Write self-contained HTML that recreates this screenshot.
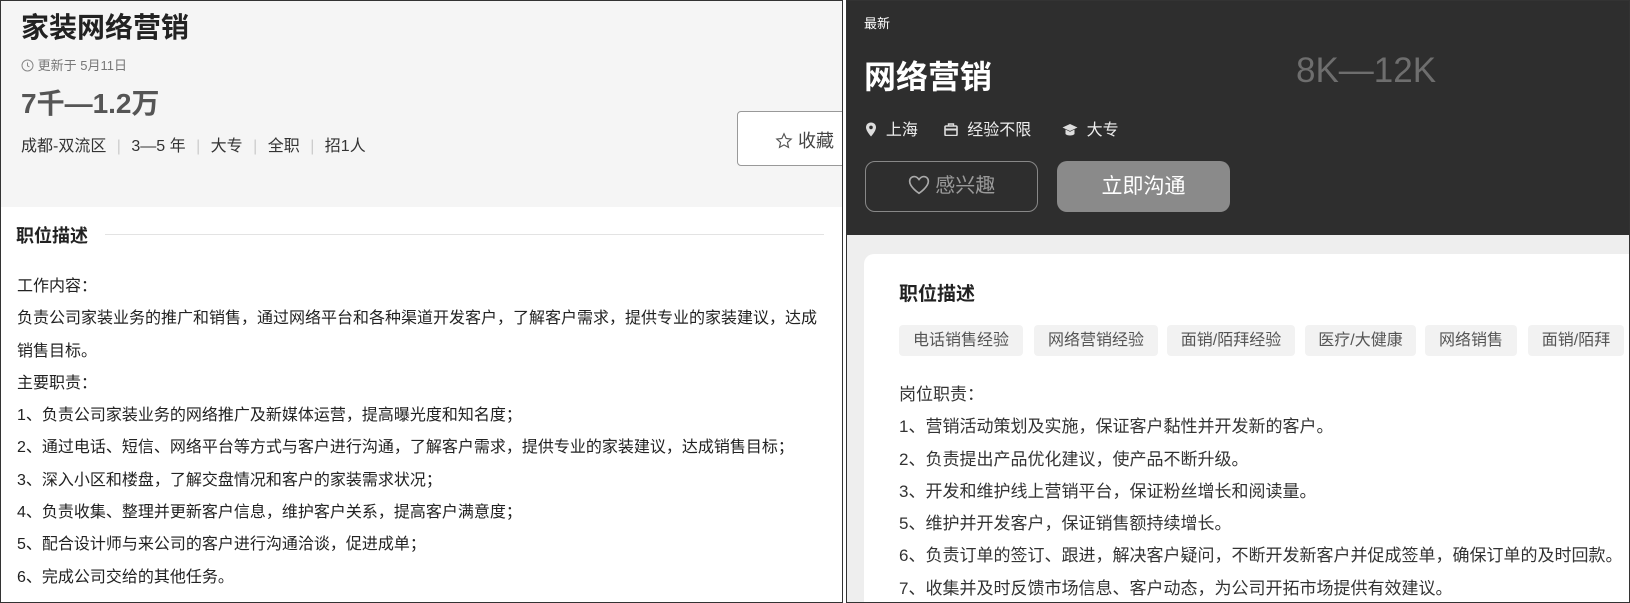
<!DOCTYPE html>
<html><head><meta charset="utf-8"><style>
*{margin:0;padding:0;box-sizing:border-box}
body{width:1630px;height:603px;background:#fff;font-family:"Liberation Sans","Noto Sans CJK SC",sans-serif;position:relative;overflow:hidden}
.a{position:absolute;white-space:nowrap}
#L{position:absolute;left:0;top:0;width:843px;height:603px;border:1px solid #333;overflow:hidden;background:#fff}
#R{position:absolute;left:846px;top:0;width:784px;height:603px;border:1px solid #333;overflow:hidden;background:#eee}
.t{position:absolute;height:31px;top:324px;background:#f2f2f2;border-radius:4px;color:#555;font-size:16px;line-height:31px;text-align:center}
</style></head><body>
<div id="L">
 <div class="a" style="left:0;top:0;width:843px;height:206px;background:#f5f5f5"></div>
 <div class="a" style="left:20px;top:5px;font-size:28px;font-weight:bold;color:#222">家装网络营销</div>
 <div class="a" style="left:20px;top:54px;font-size:13px;color:#777"><svg width="13" height="13" viewBox="0 0 13 13" style="vertical-align:-2px"><circle cx="6.5" cy="6.5" r="5.5" fill="none" stroke="#888"/><path d="M6.5 3.5V6.8L8.5 8" fill="none" stroke="#888"/></svg> 更新于 5月11日</div>
 <div class="a" style="left:20px;top:81px;font-size:28px;font-weight:bold;color:#555">7千—1.2万</div>
 <div class="a" style="left:20px;top:131px;font-size:16px;color:#333">成都-双流区 <span style="color:#ccc;margin:0 6px">|</span> 3—5 年 <span style="color:#ccc;margin:0 6px">|</span> 大专 <span style="color:#ccc;margin:0 6px">|</span> 全职 <span style="color:#ccc;margin:0 6px">|</span> 招1人</div>
 <div class="a" style="left:736px;top:110px;width:120px;height:55px;border:1px solid #999;border-radius:4px;background:#fff"></div>
 <div class="a" style="left:774px;top:126px;font-size:18px;color:#444"><svg width="18" height="18" viewBox="0 0 20 20" style="vertical-align:-3px"><path d="M10 2l2.4 5.2 5.6.6-4.2 3.8 1.2 5.5L10 14.3l-5 2.8 1.2-5.5L2 7.8l5.6-.6z" fill="none" stroke="#555" stroke-width="1.3"/></svg> 收藏</div>
 <div class="a" style="left:15px;top:221px;font-size:18px;font-weight:bold;color:#222">职位描述</div>
 <div class="a" style="left:104px;top:233px;width:719px;height:1px;background:#e3e3e3"></div>
 <div class="a" style="left:16px;top:270px;font-size:16px;line-height:32.3px;color:#222">工作内容：<br>负责公司家装业务的推广和销售，通过网络平台和各种渠道开发客户，了解客户需求，提供专业的家装建议，达成<br>销售目标。<br>主要职责：<br>1、负责公司家装业务的网络推广及新媒体运营，提高曝光度和知名度；<br>2、通过电话、短信、网络平台等方式与客户进行沟通，了解客户需求，提供专业的家装建议，达成销售目标；<br>3、深入小区和楼盘，了解交盘情况和客户的家装需求状况；<br>4、负责收集、整理并更新客户信息，维护客户关系，提高客户满意度；<br>5、配合设计师与来公司的客户进行沟通洽谈，促进成单；<br>6、完成公司交给的其他任务。</div>
</div>
<div id="R">
 <div class="a" style="left:0;top:0;width:784px;height:234px;background:#2e2e2e"></div>
 <div class="a" style="left:17px;top:12px;font-size:13px;color:#fff">最新</div>
 <div class="a" style="left:17px;top:51px;font-size:32px;font-weight:bold;color:#fff">网络营销</div>
 <div class="a" style="left:449px;top:50px;font-size:35px;color:#6e6e6e">8K—12K</div>
 <div class="a" style="left:18px;top:115px;font-size:16px;color:#eee">
  <svg width="12" height="15" viewBox="0 0 12 15" style="vertical-align:-2px"><path d="M6 0.5C3 0.5 1 2.7 1 5.4 1 9 6 14.5 6 14.5S11 9 11 5.4C11 2.7 9 .5 6 .5z" fill="#ddd"/><circle cx="6" cy="5.4" r="1.8" fill="#2e2e2e"/></svg>&nbsp; 上海
  <span style="margin-left:22px"></span><svg width="14" height="13" viewBox="0 0 14 13" style="vertical-align:-1px"><rect x="1" y="3" width="12" height="9.5" rx="1" fill="none" stroke="#ddd" stroke-width="1.6"/><path d="M4.5 3V1h5v2" fill="none" stroke="#ddd" stroke-width="1.4"/><rect x="1" y="5.5" width="12" height="2" fill="#ddd"/></svg>&nbsp; 经验不限
  <span style="margin-left:26px"></span><svg width="16" height="14" viewBox="0 0 16 14" style="vertical-align:-2px"><path d="M8 1L15.5 4.5 8 8 .5 4.5z" fill="#ddd"/><path d="M3.5 6.5v4.5c1.5 2 7.5 2 9 0V6.5L8 8.8z" fill="#ddd"/></svg>&nbsp; 大专
 </div>
 <div class="a" style="left:18px;top:160px;width:173px;height:51px;border:1px solid #888;border-radius:10px;color:#9a9a9a;font-size:20px;line-height:49px;text-align:center"><svg width="22" height="20" viewBox="0 0 20 18" style="vertical-align:-3px"><path d="M10 16.5S1.5 11 1.5 5.6C1.5 3 3.4 1.3 5.7 1.3 7.6 1.3 9 2.6 10 4 11 2.6 12.4 1.3 14.3 1.3c2.3 0 4.2 1.7 4.2 4.3C18.5 11 10 16.5 10 16.5z" fill="none" stroke="#aaa" stroke-width="1.5"/></svg> 感兴趣</div>
 <div class="a" style="left:210px;top:160px;width:173px;height:51px;background:#8a8a8a;border-radius:10px;color:#fff;font-size:21px;line-height:51px;text-align:center">立即沟通</div>
 <div class="a" style="left:17px;top:253px;width:767px;height:350px;background:#fff;border-radius:10px 0 0 0"></div>
 <div class="a" style="left:52px;top:278px;font-size:19px;font-weight:bold;color:#222">职位描述</div>
 <div class="t" style="left:52px;width:124px">电话销售经验</div>
 <div class="t" style="left:187px;width:124px">网络营销经验</div>
 <div class="t" style="left:320px;width:128px">面销/陌拜经验</div>
 <div class="t" style="left:458px;width:111px">医疗/大健康</div>
 <div class="t" style="left:578px;width:92px">网络销售</div>
 <div class="t" style="left:681px;width:96px">面销/陌拜</div>
 <div class="a" style="left:52px;top:378px;width:732px;height:225px;overflow:hidden;font-size:17px;line-height:32.3px;color:#333">岗位职责：<br>1、营销活动策划及实施，保证客户黏性并开发新的客户。<br>2、负责提出产品优化建议，使产品不断升级。<br>3、开发和维护线上营销平台，保证粉丝增长和阅读量。<br>5、维护并开发客户，保证销售额持续增长。<br>6、负责订单的签订、跟进，解决客户疑问，不断开发新客户并促成签单，确保订单的及时回款。<br>7、收集并及时反馈市场信息、客户动态，为公司开拓市场提供有效建议。</div>
</div>
</body></html>
